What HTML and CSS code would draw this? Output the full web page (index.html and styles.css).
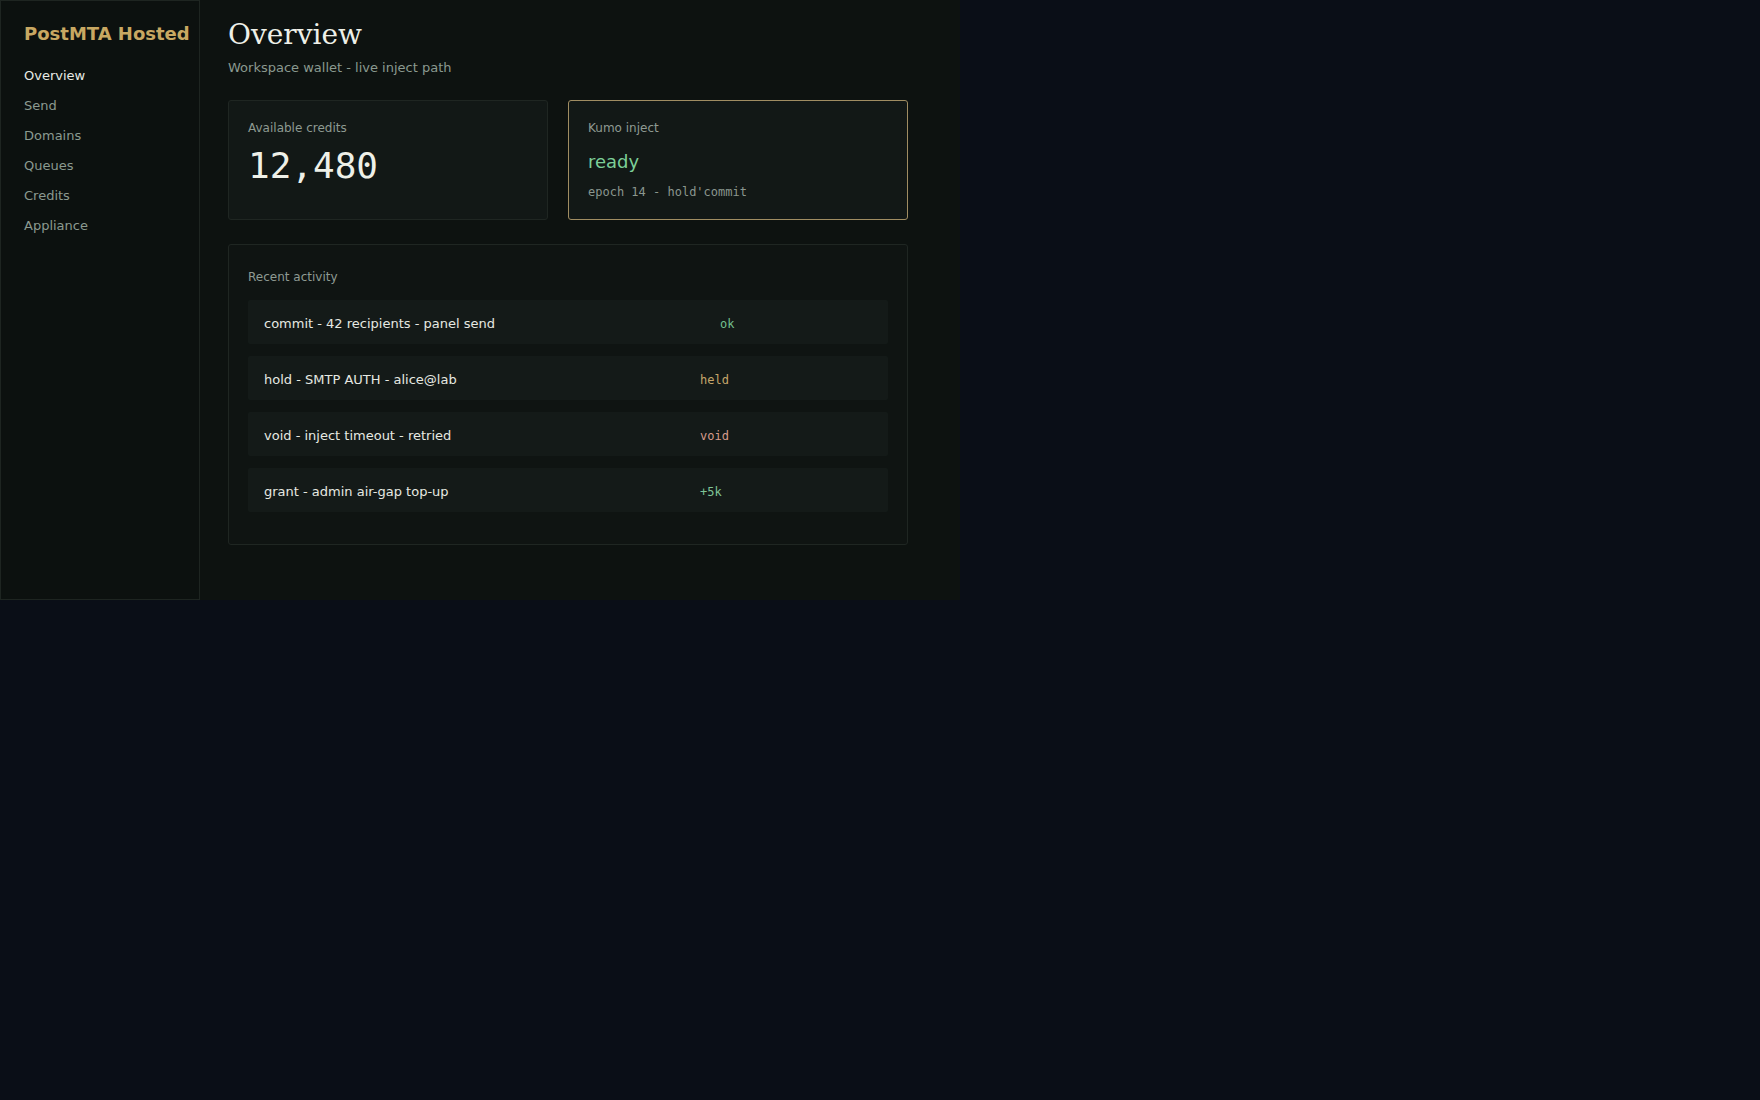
FILE: index.html
```html
<!DOCTYPE html>
<html lang="en">
<head>
<meta charset="utf-8">
<title>PostMTA Hosted — Overview</title>
<link rel="stylesheet" href="styles.css">
</head>
<body>
<div class="app">
  <aside class="sidebar">
    <div class="brand">PostMTA Hosted</div>
    <nav class="nav">
      <a class="nav-item active" href="#">Overview</a>
      <a class="nav-item" href="#">Send</a>
      <a class="nav-item" href="#">Domains</a>
      <a class="nav-item" href="#">Queues</a>
      <a class="nav-item" href="#">Credits</a>
      <a class="nav-item" href="#">Appliance</a>
    </nav>
  </aside>
  <main class="main">
    <h1 class="title">Overview</h1>
    <p class="subtitle">Workspace wallet - live inject path</p>

    <section class="stats">
      <div class="card">
        <div class="label">Available credits</div>
        <div class="big-number">12,480</div>
      </div>
      <div class="card card-accent">
        <div class="label">Kumo inject</div>
        <div class="status-word">ready</div>
        <div class="meta">epoch 14 - hold'commit</div>
      </div>
    </section>

    <section class="card activity">
      <div class="label activity-label">Recent activity</div>
      <div class="row">
        <span class="row-text">commit - 42 recipients - panel send</span>
        <span class="tag tag-ok">ok</span>
      </div>
      <div class="row">
        <span class="row-text">hold - SMTP AUTH - alice@lab</span>
        <span class="tag tag-held">held</span>
      </div>
      <div class="row">
        <span class="row-text">void - inject timeout - retried</span>
        <span class="tag tag-void">void</span>
      </div>
      <div class="row">
        <span class="row-text">grant - admin air-gap top-up</span>
        <span class="tag tag-grant">+5k</span>
      </div>
    </section>
  </main>
</div>
</body>
</html>
```

FILE: styles.css
```css
html, body {
  margin: 0;
  padding: 0;
}

body {
  background: #0a0e17;
  font-family: "DejaVu Sans", "Noto Sans", sans-serif;
  color: #e6e9e2;
}

.app {
  width: 960px;
  height: 600px;
  display: grid;
  grid-template-columns: 200px 1fr;
  background: #0d1210;
}

/* ---- sidebar ---- */
.sidebar {
  border: 1px solid #1e2521;
  padding: 22px 23px 21px;
  background: #0c110f;
}

.brand {
  font-size: 18px;
  font-weight: bold;
  color: #c8a862;
  white-space: nowrap;
  margin-bottom: 17px;
}

.nav {
  display: flex;
  flex-direction: column;
}

.nav-item {
  display: block;
  padding: 7px 0;
  line-height: 16px;
  font-size: 13px;
  color: #8b9a90;
  text-decoration: none;
}

.nav-item.active {
  color: #e8ebe4;
}

/* ---- main column ---- */
.main {
  padding: 18px 52px 0 28px;
}

.title {
  margin: 0;
  font-family: "DejaVu Serif", serif;
  font-weight: normal;
  font-size: 28px;
  color: #eef0e8;
}

.subtitle {
  margin: 9px 0 25px;
  font-size: 13px;
  color: #8a998f;
}

/* the status card gets a little more room than the balance card */
.stats {
  display: grid;
  grid-template-columns: 16fr 17fr;
  gap: 20px;
  margin-bottom: 24px;
}

.card {
  background: #121816;
  border: 1px solid #1f2622;
  border-radius: 3px;
  padding: 20px 19px 20px;
}

.card-accent {
  border-color: #a08d62;
}

.label {
  font-size: 12px;
  color: #8e9a92;
}

.big-number {
  margin-top: 10px;
  font-family: "DejaVu Sans Mono", monospace;
  font-size: 36px;
  color: #eef0e8;
}

.status-word {
  margin-top: 16px;
  font-size: 18px;
  color: #7ccf98;
}

.meta {
  margin-top: 13px;
  font-family: "DejaVu Sans Mono", monospace;
  font-size: 12px;
  color: #8a968e;
}

/* ---- recent activity ---- */
.activity {
  background: #0f1412;
  padding: 25px 19px 20px;
}

.activity-label {
  margin-bottom: 16px;
}

.row {
  display: grid;
  grid-template-columns: 1fr 172px;
  align-items: center;
  box-sizing: border-box;
  height: 44px;
  padding: 3px 16px 0;
  margin-bottom: 12px;
  background: #141a18;
  border-radius: 2px;
  font-size: 13px;
}

.row-text {
  color: #e6e9e2;
}

.tag {
  font-family: "DejaVu Sans Mono", monospace;
  font-size: 12px;
}

.tag-ok {
  padding-left: 20px;
  color: #72bf8e;
}

.tag-held {
  color: #c4a66a;
}

.tag-void {
  color: #d69c8c;
}

.tag-grant {
  color: #7fc497;
}
```
